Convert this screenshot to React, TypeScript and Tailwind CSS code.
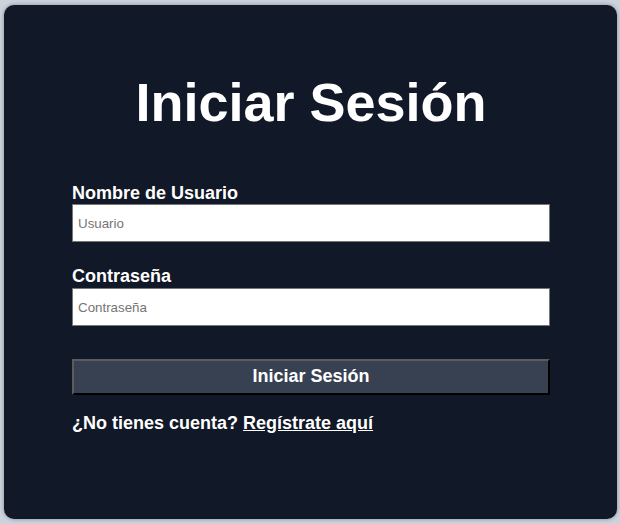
import React from "react";

export default function App() {
  return (
    <div className="h-[524px] w-[620px] bg-[#ccd3dd] pt-[5px] pl-[4px]" style={{ fontFamily: '"Liberation Sans", Arial, sans-serif' }}>
      <div className="h-[514px] w-[613px] rounded-[10px] bg-[#111827] shadow-[0_0_4px_rgba(0,0,0,0.35)] pt-[66px] pl-[68px] pr-[67px]">
        <h1 className="text-center text-[54px] font-bold leading-[62px] text-white">Iniciar Sesión</h1>
        <form className="mt-[50px] flex flex-col" onSubmit={(e) => e.preventDefault()}>
          <label className="text-[18px] font-bold leading-[21px] text-white">Nombre de Usuario</label>
          <input
            type="text"
            placeholder="Usuario"
            className="mt-0 h-[38px] w-full border border-[#767676] bg-white px-[5px] text-[13.33px] text-black placeholder:text-[#757575] outline-none"
          />
          <label className="mt-[24px] text-[18px] font-bold leading-[21px] text-white">Contraseña</label>
          <input
            type="password"
            placeholder="Contraseña"
            className="mt-[1px] h-[38px] w-full border border-[#767676] bg-white px-[5px] text-[13.33px] text-black placeholder:text-[#757575] outline-none"
          />
          <button
            type="submit"
            className="mt-[33px] h-[36px] w-full border-2 border-t-[#5b5b5b] border-l-[#5b5b5b] border-b-black border-r-black bg-[#374151] pb-[1px] text-[18px] font-bold text-white"
          >
            Iniciar Sesión
          </button>
          <p className="mt-[18px] text-[18px] font-bold leading-[21px] text-white">
            ¿No tienes cuenta? <a href="#" className="underline">Regístrate aquí</a>
          </p>
        </form>
      </div>
    </div>
  );
}
